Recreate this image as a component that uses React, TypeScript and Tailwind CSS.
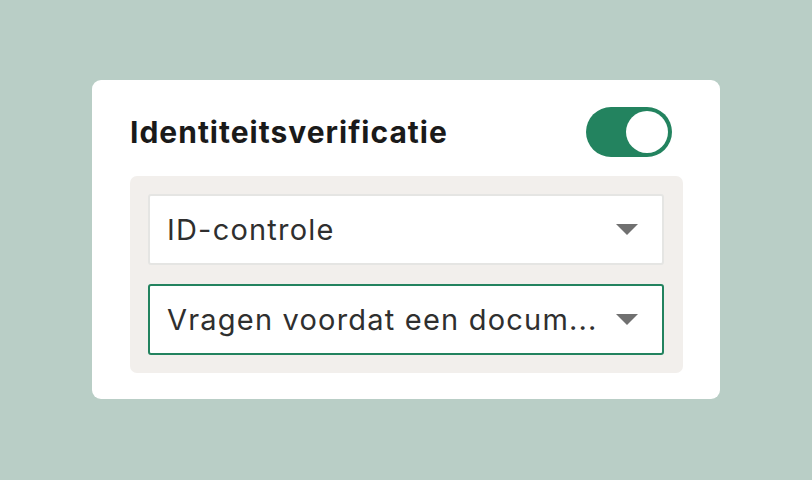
import React from "react";

function Arrow() {
  return (
    <svg width="22" height="11" viewBox="0 0 22 11" className="shrink-0">
      <path d="M0 0 H22 L11 11 Z" fill="#707070" />
    </svg>
  );
}

function Select({ label, active }: { label: string; active?: boolean }) {
  return (
    <div
      className={
        "flex h-[71px] items-center justify-between rounded-[3px] bg-white pl-[17px] pr-[24px] border-2 " +
        (active ? "border-[#23835f]" : "border-[#e5e5e3]")
      }
    >
      <span className="whitespace-nowrap text-[29px] leading-[40px] tracking-[1.2px] text-[#2f2f2f]">{label}</span>
      <Arrow />
    </div>
  );
}

export default function App() {
  return (
    <div
      className="flex h-[480px] w-[812px] items-start justify-center bg-[#b9cec6] pt-[80px]"
      style={{ fontFamily: "Inter, 'Noto Sans', sans-serif" }}
    >
      <div className="w-[628px] rounded-[9px] bg-white pl-[38px] pr-[37px] pt-[27px] pb-[26px]">
        <div className="flex items-center justify-between pr-[11px]">
          <h1 className="text-[30px] leading-[40px] font-bold text-[#1a1a1a] tracking-[1px]">Identiteitsverificatie</h1>
          <div className="flex h-[50px] w-[86px] items-center justify-end rounded-full bg-[#23835f] pr-[4px]">
            <div className="h-[42px] w-[42px] rounded-full bg-white" />
          </div>
        </div>
        <div className="mt-[19px] flex flex-col gap-[19px] rounded-[7px] bg-[#f2efec] p-[18px] pr-[19px]">
          <Select label="ID-controle" />
          <Select label="Vragen voordat een docum..." active />
        </div>
      </div>
    </div>
  );
}
